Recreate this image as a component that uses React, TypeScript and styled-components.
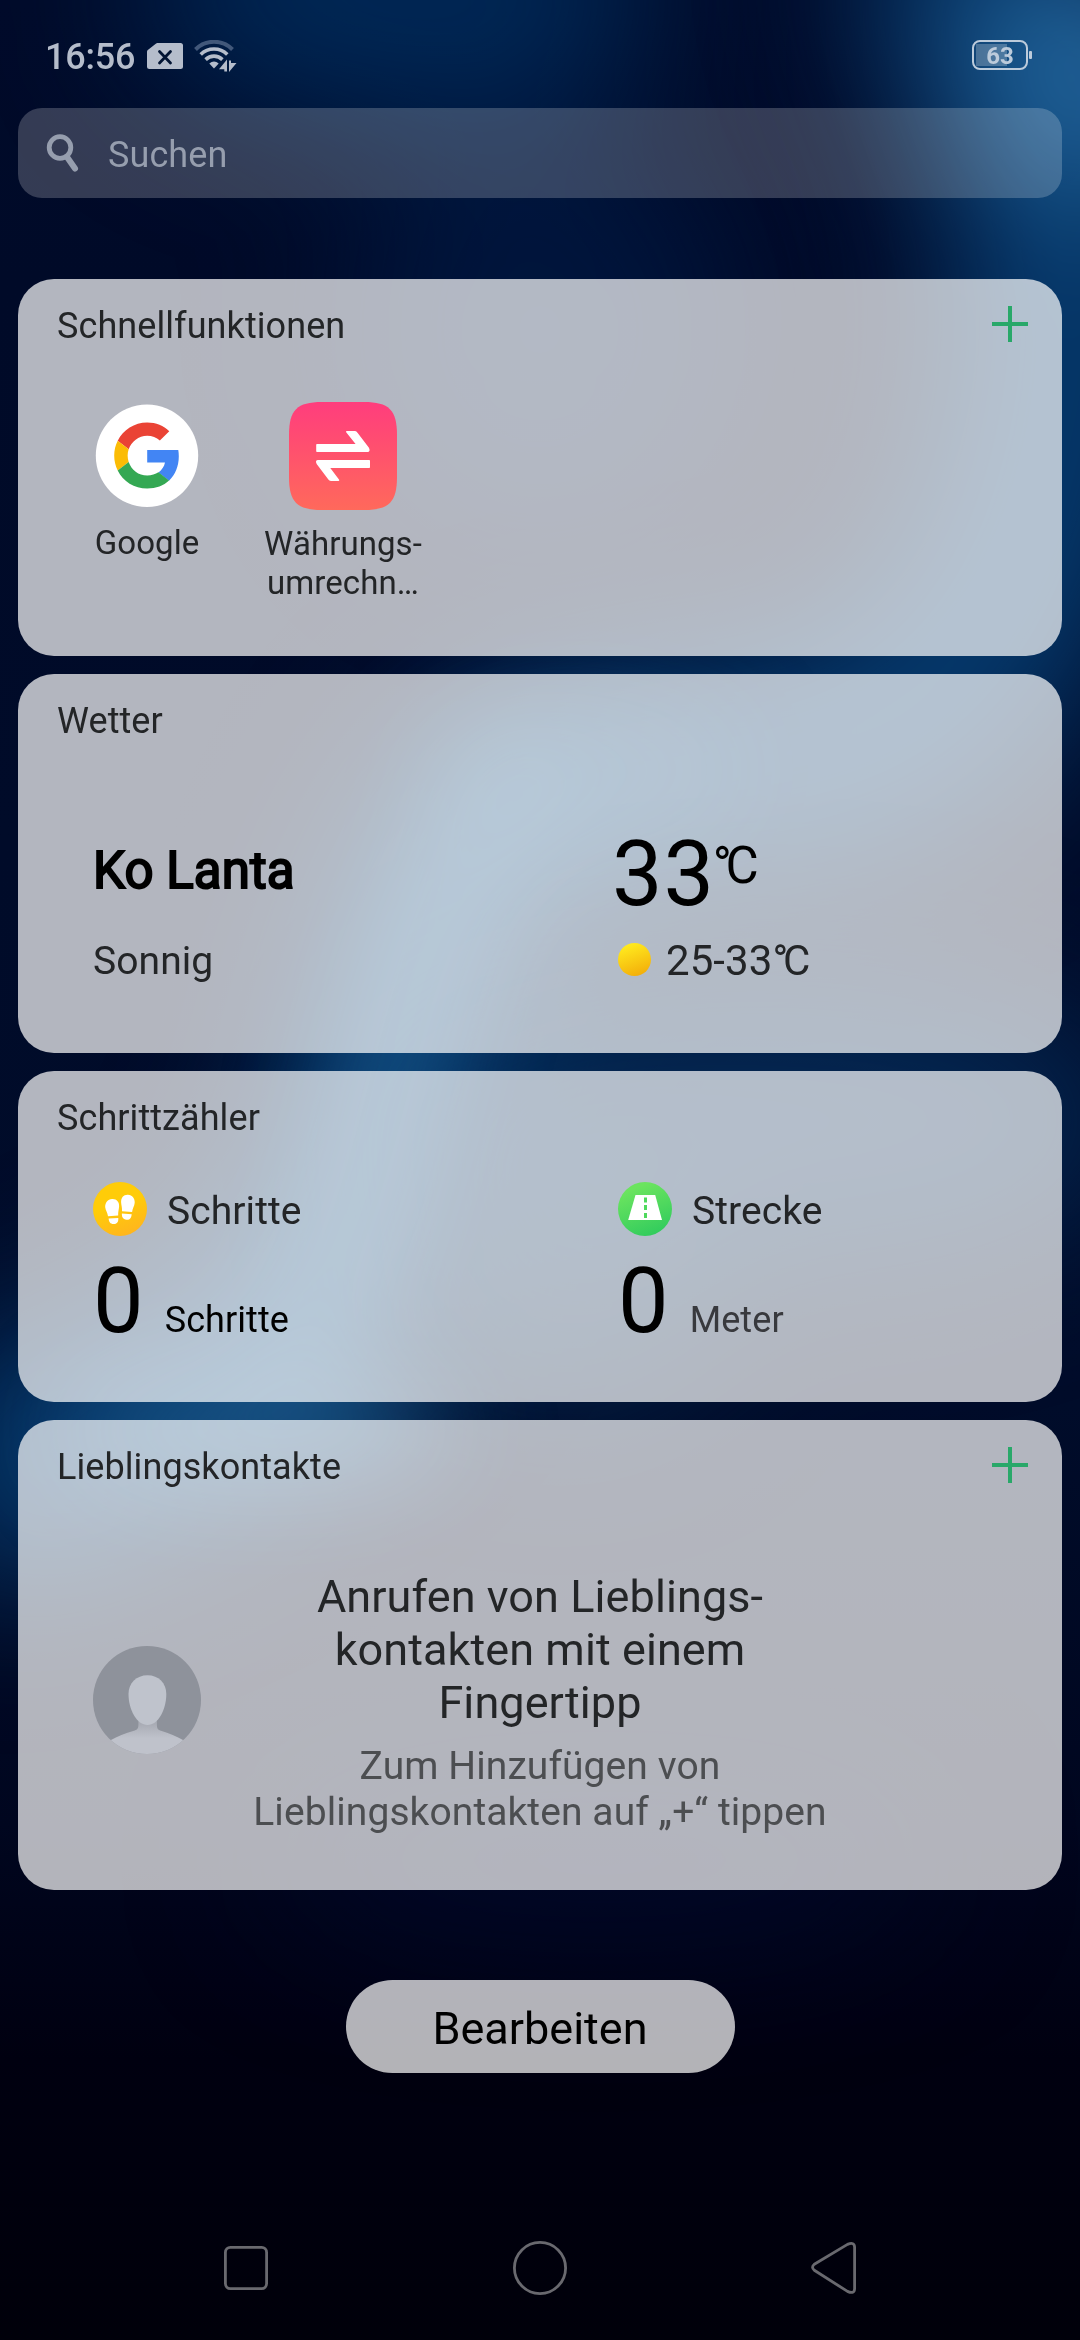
import React from 'react';
import styled, { createGlobalStyle } from 'styled-components';

const GlobalStyle = createGlobalStyle`
  * { box-sizing: border-box; }
  body { margin: 0; background: #00000c; }
`;

const Screen = styled.div`
  display: grid;
  width: 1080px;
  height: 2340px;
  overflow: hidden;
  font-family: Roboto, "Noto Sans", sans-serif;
  font-size: 36px;
  letter-spacing: 0.08px;
  color: #232527;
`;

const WallpaperSvg = styled.svg`
  grid-area: 1 / 1;
  display: block;
  width: 1080px;
  height: 2340px;
`;

const Content = styled.div`
  grid-area: 1 / 1;
  z-index: 1;
  display: flex;
  flex-direction: column;
  align-items: stretch;
  padding: 0 18px;
`;

const StatusBar = styled.header`
  display: flex;
  align-items: flex-start;
  height: 108px;
  padding: 36px 30px 0 27px;
  color: #b5bdcb;
`;

const Clock = styled.span`
  width: 102px;
  font-weight: 500;
  line-height: 42px;
  letter-spacing: -0.2px;
`;

const StatusIcon = styled.svg<{ $gap?: number; $top?: number }>`
  display: block;
  flex: none;
  margin-left: ${(p) => p.$gap ?? 0}px;
  margin-top: ${(p) => p.$top ?? 0}px;
`;

const Battery = styled.div`
  display: flex;
  align-items: center;
  gap: 1px;
  margin-left: auto;
  margin-top: 4px;
  color: #bccbdb;
`;

const BatteryBody = styled.div`
  display: flex;
  align-items: center;
  justify-content: center;
  width: 56px;
  height: 30px;
  padding-top: 1px;
  border: 2px solid currentColor;
  border-radius: 8px;
  font-size: 24px;
  font-weight: 700;
  line-height: 30px;
  background: linear-gradient(90deg, rgba(255, 255, 255, 0.24) 31px, transparent 31px) 2px 2px / 48px 22px no-repeat;
`;

const BatteryCap = styled.div`
  width: 3px;
  height: 8px;
  border-radius: 1px;
  background: currentColor;
`;

const SearchField = styled.div`
  display: flex;
  align-items: center;
  height: 90px;
  margin-bottom: 81px;
  padding: 4px 28px 0 28px;
  gap: 29px;
  border-radius: 24px;
  background: rgba(255, 255, 255, 0.205);
  color: #969eae;
`;

const SearchGlyph = styled.svg`
  display: block;
  margin-top: -4px;
`;

const CardList = styled.main`
  display: flex;
  flex-direction: column;
  gap: 18px;
`;

const Card = styled.section<{ $height: number }>`
  height: ${(p) => p.$height}px;
  border-radius: 36px;
  background: rgba(255, 255, 255, 0.7);
`;

const CardHeader = styled.div`
  display: flex;
  align-items: flex-start;
  justify-content: space-between;
  height: 68px;
  padding: 26px 34px 0 39px;
`;

const CardTitle = styled.h2`
  margin: 0;
  font-size: 36px;
  font-weight: 400;
  line-height: 42px;
`;

const AddGlyph = styled.svg`
  display: block;
  margin-top: 1px;
`;

const Shortcuts = styled.div`
  display: flex;
  padding: 55px 0 0 31px;
`;

const Shortcut = styled.div<{ $gap: number }>`
  display: flex;
  flex-direction: column;
  align-items: center;
  width: 196px;
  gap: ${(p) => p.$gap}px;
  font-size: 33px;
  line-height: 39px;
  text-align: center;
  white-space: pre-line;
`;

const Columns = styled.div`
  display: grid;
  grid-template-columns: 525px 1fr;
  padding-left: 75px;
`;

const Column = styled.div<{ $top: number }>`
  padding-top: ${(p) => p.$top}px;
`;

const City = styled.div`
  font-size: 51px;
  font-weight: 400;
  line-height: 60px;
  color: #000;
  margin-bottom: 37px;
  -webkit-text-stroke: 2px #000;
`;

const Condition = styled.div`
  font-size: 39px;
  line-height: 46px;
`;

const Temperature = styled.div`
  display: flex;
  align-items: flex-start;
  height: 106px;
  margin: 0 0 8px -6px;
  font-size: 90px;
  line-height: 106px;
  letter-spacing: 0.8px;
  color: #000;
`;

const Unit = styled.span`
  margin-left: -2px;
  padding-top: 14px;
  font-size: 51px;
  line-height: 60px;
`;

const Degree = styled.span`
  letter-spacing: -0.125em;
`;

const Range = styled.div`
  display: flex;
  align-items: center;
  gap: 15px;
  font-size: 42px;
  line-height: 50px;
`;

const Sun = styled.i`
  width: 33px;
  height: 33px;
  margin-top: -4px;
  border-radius: 50%;
  background: linear-gradient(160deg, #ffea1e 12%, #f3ae0a 90%);
`;

const MetricName = styled.div`
  display: flex;
  align-items: center;
  gap: 20px;
  height: 54px;
  margin-bottom: 13px;
  font-size: 39px;
`;

const MetricLabel = styled.span`
  padding-top: 3px;
  line-height: 46px;
`;

const MetricValue = styled.div<{ $unit: string }>`
  display: flex;
  align-items: baseline;
  gap: 21px;
  height: 106px;
  font-size: 90px;
  line-height: 106px;
  color: #000;

  small {
    font-size: 36px;
    line-height: 42px;
    color: ${(p) => p.$unit};
  }
`;

const Block = styled.svg`
  display: block;
  flex: none;
`;

const Contacts = styled.div`
  display: grid;
  grid-template-columns: 183px 1fr 183px;
  padding-top: 82px;
`;

const AvatarSlot = styled.div`
  padding: 76px 0 0 75px;
`;

const Hint = styled.div`
  display: flex;
  flex-direction: column;
  align-items: center;
  gap: 14px;
  text-align: center;
  white-space: pre;
`;

const HintTitle = styled.p`
  margin: 0;
  font-size: 45px;
  line-height: 53px;
`;

const HintText = styled.p`
  margin: 0;
  font-size: 39px;
  line-height: 46px;
  color: #4c4e51;
`;

const EditButton = styled.button`
  align-self: center;
  width: 389px;
  height: 93px;
  margin-top: 90px;
  padding: 4px 0 0;
  border: 0;
  border-radius: 47px;
  background: rgba(255, 255, 255, 0.7);
  font: 400 45px/53px Roboto, "Noto Sans", sans-serif;
  color: #000;
`;

const NavBar = styled.nav`
  display: flex;
  align-items: center;
  justify-content: space-between;
  height: 54px;
  margin-top: 168px;
  padding: 0 205px 0 206px;
`;

const Wallpaper = () => (
  <WallpaperSvg viewBox="0 0 1080 2340" fill="none" aria-hidden="true">
    <defs>
      <linearGradient id="night" x1="0" y1="0" x2="0" y2="2340" gradientUnits="userSpaceOnUse">
        <stop offset="0" stopColor="#000b2a" />
        <stop offset="0.12" stopColor="#000a28" />
        <stop offset="0.6" stopColor="#000c2a" />
        <stop offset="0.78" stopColor="#00061f" />
        <stop offset="0.88" stopColor="#000010" />
        <stop offset="1" stopColor="#00000a" />
      </linearGradient>
      <filter id="soft" x="-600" y="-600" width="2300" height="3500" filterUnits="userSpaceOnUse" colorInterpolationFilters="sRGB">
        <feGaussianBlur stdDeviation="75" />
      </filter>
      <filter id="mid" x="-600" y="-600" width="2300" height="3500" filterUnits="userSpaceOnUse" colorInterpolationFilters="sRGB">
        <feGaussianBlur stdDeviation="50" />
      </filter>
    </defs>
    <rect width="1080" height="2340" fill="url(#night)" />
    <g filter="url(#soft)">
      <ellipse cx="400" cy="-10" rx="260" ry="130" fill="#00346a" opacity="0.7" />
      <ellipse cx="540" cy="330" rx="190" ry="210" fill="#001a45" opacity="0.7" />
    </g>
    <g filter="url(#soft)">
      <path d="M940 -100 C1020 60 1090 200 1070 360 C1050 520 1020 600 940 690 C830 800 630 740 510 820 C420 920 410 1080 370 1200 C310 1330 200 1420 -60 1490" stroke="#063c70" strokeWidth="215" />
      <path d="M990 20 L1200 120" stroke="#23689f" strokeWidth="220" />
    </g>
    <g filter="url(#soft)">
      <ellipse cx="760" cy="1120" rx="380" ry="150" fill="#06305f" opacity="0.75" />
      <ellipse cx="560" cy="1280" rx="160" ry="130" fill="#06345f" opacity="0.6" />
      <ellipse cx="600" cy="1860" rx="330" ry="80" fill="#000a30" opacity="0.6" />
    </g>
    <g filter="url(#mid)">
      <path d="M560 770 C460 820 425 940 395 1060 C360 1220 320 1320 260 1410" stroke="#1f659a" strokeWidth="75" opacity="0.65" />
      <ellipse cx="265" cy="1430" rx="190" ry="60" fill="#205f92" opacity="0.7" />
      <ellipse cx="580" cy="770" rx="160" ry="70" fill="#125488" opacity="0.4" />
    </g>
  </WallpaperSvg>
);

const AddIcon = () => (
  <AddGlyph width="36" height="36" viewBox="0 0 36 36">
    <path d="M16 0h4v16h16v4H20v16h-4V20H0v-4h16z" fill="#29a869" />
  </AddGlyph>
);

const SimIcon = () => (
  <StatusIcon width="36" height="26" viewBox="0 0 36 26" $top={7}>
    <path d="M10.5 0H33.5Q36 0 36 2.5V23.5Q36 26 33.5 26H2.5Q0 26 0 23.5V8.8Q0 7.8.8 7.1L8.8.7Q9.600 0 10.500 0z" fill="#b5bdcb" />
    <path d="M12.500 8.500l11 11.500M23.500 8.500l-11 11.500" stroke="#021433" strokeWidth="2.800" strokeLinecap="round" />
  </StatusIcon>
);

const WifiIcon = () => (
  <StatusIcon width="43" height="32" viewBox="0 0 43 32" $gap={11} $top={4} fill="none">
    <path d="M1.500 9.500A26 26 0 0 1 38.500 9.500" stroke="#42587a" strokeWidth="4" />
    <g stroke="#b5bdcb" strokeWidth="3.600">
      <path d="M6.700 14.500A19 19 0 0 1 33.300 14.500" />
      <path d="M11.600 19.600A12 12 0 0 1 28.400 19.600" />
    </g>
    <path d="M15.300 23.600Q20 19.600 24.700 23.600L20 28.400z" fill="#b5bdcb" />
    <path d="M25 29.300L33 19.500V31.500H30.300V29.300z" fill="#b5bdcb" />
    <path d="M35 20.500H37V23H42.500L35 32z" fill="#b5bdcb" />
  </StatusIcon>
);

const SearchIcon = () => (
  <SearchGlyph width="33" height="38" viewBox="0 0 33 38" fill="none" stroke="#969eae">
    <circle cx="14" cy="13.500" r="10.800" strokeWidth="4.800" />
    <path d="M21 23l8 11.500" strokeWidth="6" strokeLinecap="round" />
  </SearchGlyph>
);

const GoogleIcon = () => (
  <Block width="108" height="108" viewBox="0 0 108 108">
    <circle cx="54" cy="53.700" r="51.200" fill="#fff" />
    <g transform="translate(21.200 20.600) scale(1.375)">
      <path fill="#ea4335" d="M24 9.500c3.540 0 6.710 1.220 9.210 3.600l6.850-6.850C35.900 2.380 30.470 0 24 0 14.620 0 6.510 5.380 2.560 13.220l7.980 6.190C12.430 13.720 17.740 9.500 24 9.500z" />
      <path fill="#4285f4" d="M46.980 24.550c0-1.570-.15-3.090-.38-4.550H24v9.020h12.940c-.58 2.960-2.260 5.480-4.780 7.180l7.730 6c4.510-4.180 7.090-10.360 7.090-17.650z" />
      <path fill="#fbbc05" d="M10.530 28.590c-.48-1.450-.76-2.990-.76-4.590s.27-3.140.76-4.590l-7.980-6.190C.92 16.460 0 20.120 0 24c0 3.880.92 7.540 2.560 10.780l7.970-6.190z" />
      <path fill="#34a853" d="M24 48c6.480 0 11.930-2.130 15.890-5.810l-7.730-6c-2.150 1.450-4.920 2.300-8.160 2.300-6.260 0-11.570-4.220-13.470-9.910l-7.980 6.190C6.510 42.620 14.620 48 24 48z" />
    </g>
  </Block>
);

const CurrencyIcon = () => (
  <Block width="108" height="108" viewBox="0 0 108 108">
    <defs>
      <linearGradient id="coral" x1="0" y1="0" x2="0" y2="1">
        <stop offset="0" stopColor="#ff3d7d" />
        <stop offset="1" stopColor="#ff695b" />
      </linearGradient>
    </defs>
    <path d="M33 0H75C100 0 108 8 108 33V75C108 100 100 108 75 108H33C8 108 0 100 0 75V33C0 8 8 0 33 0z" fill="url(#coral)" />
    <g fill="#fff" stroke="#fff" strokeWidth="1.600" strokeLinejoin="round">
      <path d="M28 42.800H68.200L57.800 29.800H65.500Q66.800 29.800 67.500 30.800L79.300 46.200Q80.600 49.200 78.500 49.200H28z" />
      <path d="M80.200 58.800V65.200H39.700L49.500 78.200H42.500Q41 78.200 40.200 77.200L28.300 61.500Q27 58.800 29 58.800z" />
    </g>
  </Block>
);

const StepsIcon = () => (
  <Block width="54" height="54" viewBox="0 0 54 54">
    <defs>
      <linearGradient id="amber" x1="0.300" y1="0" x2="0.700" y2="1">
        <stop offset="0.400" stopColor="#ffcc08" />
        <stop offset="1" stopColor="#ffb41f" />
      </linearGradient>
    </defs>
    <circle cx="27" cy="27" r="27" fill="url(#amber)" />
    <g fill="#fff">
      <path d="M19 17C23.500 16.600 26.500 20 26.100 24.500C25.900 27.500 25 30 25.200 33.500L15 34.300C14.600 30.500 12.500 28.500 12.200 25.300C11.900 20.800 14.800 17.300 19 17z" />
      <path d="M15.600 36.500L25.300 35.900C25.500 39.500 24.500 41.900 20.800 42C17.200 42.100 16 40 15.600 36.500z" />
      <path d="M35 12.700C39.300 13 42 16.500 41.700 20.800C41.400 24.300 39.500 26.200 39.100 30L29 29.200C29.200 25.700 28.300 23.200 28.100 20.200C27.900 15.500 30.700 12.400 35 12.700z" />
      <path d="M28.900 31.600L38.700 32.200C38.300 35.900 37 37.900 33.500 37.700C30 37.500 28.700 35.200 28.900 31.600z" />
    </g>
  </Block>
);

const RoadIcon = () => (
  <Block width="54" height="54" viewBox="0 0 54 54">
    <defs>
      <linearGradient id="leaf" x1="0.300" y1="0" x2="0.700" y2="1">
        <stop offset="0.100" stopColor="#6be45f" />
        <stop offset="1" stopColor="#30cb5d" />
      </linearGradient>
    </defs>
    <circle cx="27" cy="27" r="27" fill="url(#leaf)" />
    <path d="M17.500 13H37.200L44 38H10.200z" fill="#fff" />
    <path d="M26 15.500h3v5h-3zM26 23h3v5h-3zM26 31h3v5h-3z" fill="#4fd95d" />
  </Block>
);

const AvatarIcon = () => (
  <Block width="108" height="108" viewBox="0 0 108 108">
    <defs>
      <linearGradient id="collar" x1="0" y1="78" x2="0" y2="92" gradientUnits="userSpaceOnUse">
        <stop offset="0" stopColor="#a9acb5" />
        <stop offset="1" stopColor="#bfc2cb" />
      </linearGradient>
      <clipPath id="disc">
        <circle cx="54" cy="54" r="54" />
      </clipPath>
    </defs>
    <g clipPath="url(#disc)">
      <rect width="108" height="108" fill="#8e929b" />
      <path d="M45.400 74V79C45.400 83 43.500 84 41 84.800C32 87.500 24 90.500 18 94L10 108H98L90 94C84 90.500 76 87.500 68 84.800C65.500 84 63.900 83 63.900 79V74z" fill="url(#collar)" />
      <path d="M54.500 29.300C65.500 29.300 73.300 37 73.300 48C73.300 64 65 79 54.500 79C44 79 35.500 64 35.500 48C35.500 37 43.500 29.300 54.500 29.300z" fill="#bfc3cc" />
    </g>
  </Block>
);

const NavIcons = () => (
  <NavBar>
    <Block width="44" height="44" viewBox="0 0 44 44" fill="none">
      <rect x="1.400" y="1.400" width="41.200" height="41.200" rx="5" stroke="#69696f" strokeWidth="2.800" />
    </Block>
    <Block width="54" height="54" viewBox="0 0 54 54" fill="none">
      <circle cx="27" cy="27" r="25.600" stroke="#69696f" strokeWidth="2.800" />
    </Block>
    <Block width="46" height="54" viewBox="0 0 46 54" fill="none">
      <path d="M36.500 3.400L3.300 23.300Q-.2 26.300 3.300 29.300L36.500 50.400Q43.600 53.500 43.600 47.500V6.500Q43.600 .4 36.500 3.400z" stroke="#69696f" strokeWidth="2.800" strokeLinejoin="round" />
    </Block>
  </NavBar>
);

export default function App() {
  return (
    <>
      <GlobalStyle />
      <Screen>
        <Wallpaper />
        <Content>
          <StatusBar>
            <Clock>16:56</Clock>
            <SimIcon />
            <WifiIcon />
            <Battery>
              <BatteryBody>63</BatteryBody>
              <BatteryCap />
            </Battery>
          </StatusBar>

          <SearchField>
            <SearchIcon />
            <span>Suchen</span>
          </SearchField>

          <CardList>
            <Card $height={377}>
              <CardHeader>
                <CardTitle>Schnellfunktionen</CardTitle>
                <AddIcon />
              </CardHeader>
              <Shortcuts>
                <Shortcut $gap={13}>
                  <GoogleIcon />
                  <span>Google</span>
                </Shortcut>
                <Shortcut $gap={14}>
                  <CurrencyIcon />
                  <span>{'Währungs-\numrechn…'}</span>
                </Shortcut>
              </Shortcuts>
            </Card>

            <Card $height={379}>
              <CardHeader>
                <CardTitle>Wetter</CardTitle>
              </CardHeader>
              <Columns>
                <Column $top={99}>
                  <City>Ko Lanta</City>
                  <Condition>Sonnig</Condition>
                </Column>
                <Column $top={80}>
                  <Temperature>
                    33
                    <Unit>
                      <Degree>°</Degree>C
                    </Unit>
                  </Temperature>
                  <Range>
                    <Sun />
                    <span>
                      25-33<Degree>°</Degree>C
                    </span>
                  </Range>
                </Column>
              </Columns>
            </Card>

            <Card $height={331}>
              <CardHeader>
                <CardTitle>Schrittzähler</CardTitle>
              </CardHeader>
              <Columns>
                <Column $top={43}>
                  <MetricName>
                    <StepsIcon />
                    <MetricLabel>Schritte</MetricLabel>
                  </MetricName>
                  <MetricValue $unit="#000">
                    0<small>Schritte</small>
                  </MetricValue>
                </Column>
                <Column $top={43}>
                  <MetricName>
                    <RoadIcon />
                    <MetricLabel>Strecke</MetricLabel>
                  </MetricName>
                  <MetricValue $unit="#38393d">
                    0<small>Meter</small>
                  </MetricValue>
                </Column>
              </Columns>
            </Card>

            <Card $height={470}>
              <CardHeader>
                <CardTitle>Lieblingskontakte</CardTitle>
                <AddIcon />
              </CardHeader>
              <Contacts>
                <AvatarSlot>
                  <AvatarIcon />
                </AvatarSlot>
                <Hint>
                  <HintTitle>{'Anrufen von Lieblings-\nkontakten mit einem\nFingertipp'}</HintTitle>
                  <HintText>{'Zum Hinzufügen von\nLieblingskontakten auf „+“ tippen'}</HintText>
                </Hint>
              </Contacts>
            </Card>
          </CardList>

          <EditButton>Bearbeiten</EditButton>
          <NavIcons />
        </Content>
      </Screen>
    </>
  );
}
